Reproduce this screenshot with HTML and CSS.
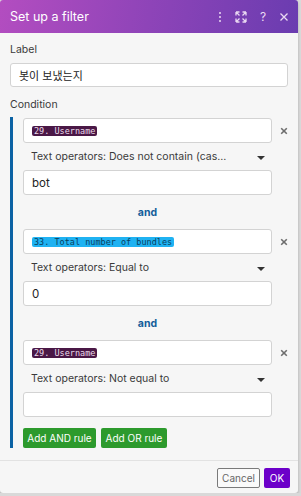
FILE: index.html
```html
<!doctype html>
<html lang="ko">
<head>
<meta charset="utf-8">
<meta name="viewport" content="width=device-width, initial-scale=1">
<title>Set up a filter</title>
<link rel="stylesheet" href="styles.css">
</head>
<body>

<div class="dialog">
	<div class="dialog-head">
		<h1>Set up a filter</h1>
		<div class="head-icons">
			<svg width="10" height="12" viewBox="0 0 10 12"><circle cx="5" cy="2" r="1"/><circle cx="5" cy="6" r="1"/><circle cx="5" cy="10" r="1"/></svg>
			<svg width="12" height="12" viewBox="0 0 12 12" class="stroke"><path d="M1 1h3.5M1 1v3.5M1 1l3.5 3.5M11 1h-3.5M11 1v3.5M11 1l-3.5 3.5M1 11h3.5M1 11v-3.5M1 11l3.5-3.5M11 11h-3.5M11 11v-3.5M11 11l-3.5-3.5"/></svg>
			<span class="q">?</span>
			<svg width="10" height="10" viewBox="0 0 10 10" class="stroke"><path d="M1.5 1.5l7 7M8.5 1.5l-7 7"/></svg>
		</div>
	</div>

	<div class="dialog-body">
		<div class="field-label">Label</div>
		<div class="input korean">봇이 보냈는지</div>

		<div class="field-label condition-label">Condition</div>

		<div class="condition">
			<div class="rule">
				<div class="rule-row">
					<div class="input operand"><span class="pill pill--purple">29. Username</span></div>
					<svg class="remove" width="10" height="10" viewBox="0 0 10 10"><path d="M1.5 1.5l7 7M8.5 1.5l-7 7"/></svg>
				</div>
				<div class="operator">Text operators: Does not contain (cas...<span class="caret"></span></div>
				<div class="input operand">bot</div>
			</div>

			<div class="joiner">and</div>

			<div class="rule">
				<div class="rule-row">
					<div class="input operand"><span class="pill pill--cyan">33. Total number of bundles</span></div>
					<svg class="remove" width="10" height="10" viewBox="0 0 10 10"><path d="M1.5 1.5l7 7M8.5 1.5l-7 7"/></svg>
				</div>
				<div class="operator">Text operators: Equal to<span class="caret"></span></div>
				<div class="input operand">0</div>
			</div>

			<div class="joiner">and</div>

			<div class="rule">
				<div class="rule-row">
					<div class="input operand"><span class="pill pill--purple">29. Username</span></div>
					<svg class="remove" width="10" height="10" viewBox="0 0 10 10"><path d="M1.5 1.5l7 7M8.5 1.5l-7 7"/></svg>
				</div>
				<div class="operator">Text operators: Not equal to<span class="caret"></span></div>
				<div class="input operand"></div>
			</div>

			<div class="rule-buttons">
				<button type="button" class="btn-green add-and">Add AND rule</button>
				<button type="button" class="btn-green add-or">Add OR rule</button>
			</div>
		</div>
	</div>

	<div class="dialog-foot">
		<button type="button" class="btn-cancel">Cancel</button>
		<button type="button" class="btn-ok">OK</button>
	</div>
</div>

</body>
</html>
```

FILE: styles.css
```css
body {
	margin: 0;
	padding: 0;
	background: #d9d9d9;
	font-family: 'Inter', 'Noto Sans', 'Noto Sans CJK KR', sans-serif;
	font-size: 10.5px;
	color: #3a3a3a;
}

.dialog {
	width: 298px;
	height: 493px;
	background: #f6f6f6;
	border-radius: 3px;
	box-shadow: 0 2px 3px rgba(0, 0, 0, 0.2);
	display: flex;
	flex-direction: column;
	overflow: hidden;
}

.dialog-head {
	height: 33px;
	flex: none;
	display: flex;
	align-items: center;
	justify-content: space-between;
	padding: 0 9px 0 10px;
	background: linear-gradient(100deg, #b34dc0 0%, #8e44b8 50%, #6a3cb0 100%);
}

h1 {
	margin: 0;
	font-size: 12.5px;
	font-weight: 400;
	color: #fff;
}

.head-icons {
	display: flex;
	align-items: center;
	gap: 10px;
}
.head-icons svg {
	fill: #ead9f2;
}
.head-icons .stroke {
	fill: none;
	stroke: #ead9f2;
	stroke-width: 1.3;
}
.head-icons .q {
	width: 12px;
	text-align: center;
	font-size: 12px;
	color: #ead9f2;
}

.dialog-body {
	flex: 1;
	padding: 10px 10px 0;
}

.field-label {
	line-height: 14px;
	margin-bottom: 6px;
}

.condition-label {
	margin-top: 11px;
	margin-bottom: 5px;
}

.input {
	box-sizing: border-box;
	height: 24px;
	background: #fff;
	border: 1px solid #d3d3d3;
	border-radius: 3px;
	display: flex;
	align-items: center;
	padding: 0 8px;
	font-size: 11.5px;
	color: #222;
}
.korean {
	font-family: 'Noto Sans CJK KR', sans-serif;
	font-size: 11px;
}

.condition {
	border-left: 3px solid #0b62a4;
	padding: 1px 0 0 10px;
}

.rule-row {
	display: flex;
	align-items: center;
}

.operand {
	width: 249px;
	height: 25px;
	flex: none;
}

.remove {
	margin-left: 8px;
	fill: none;
	stroke: #6d6d6d;
	stroke-width: 2;
}

.pill {
	font-family: 'DejaVu Sans Mono', monospace;
	font-size: 8.5px;
	line-height: 10px;
	padding: 0 2px;
	border-radius: 2px;
}
.pill--purple {
	background: #4a1846;
	color: #eadcea;
}
.pill--cyan {
	background: #1fb2f2;
	color: #0a3f5e;
}

.operator {
	width: 249px;
	box-sizing: border-box;
	height: 27px;
	display: flex;
	align-items: center;
	justify-content: space-between;
	padding: 0 7px 0 8px;
}

.caret {
	width: 0;
	height: 0;
	border-left: 4px solid transparent;
	border-right: 4px solid transparent;
	border-top: 4px solid #333;
	margin-top: 2px;
}

.joiner {
	width: 249px;
	height: 34px;
	display: flex;
	align-items: center;
	justify-content: center;
	font-weight: 700;
	color: #135d9a;
}

.rule-buttons {
	display: flex;
	gap: 5px;
	margin-top: 11px;
}

button {
	font-family: inherit;
	font-size: 10px;
	height: 20px;
	padding: 0;
	border-radius: 2px;
	cursor: pointer;
}

.btn-green {
	border: none;
	background: #2d9a2d;
	color: #fff;
}
.add-and {
	width: 73px;
}
.add-or {
	width: 66px;
}

.dialog-foot {
	flex: none;
	margin-top: 12px;
	border-top: 1px solid #e2e2e2;
	display: flex;
	justify-content: flex-end;
	gap: 4px;
	padding: 7px 8px 6px;
}

.btn-cancel {
	width: 43px;
	background: #fafafa;
	border: 1px solid #7a7a7a;
	color: #666;
}

.btn-ok {
	width: 26px;
	border: none;
	background: #6c00c9;
	color: #fff;
}
```
